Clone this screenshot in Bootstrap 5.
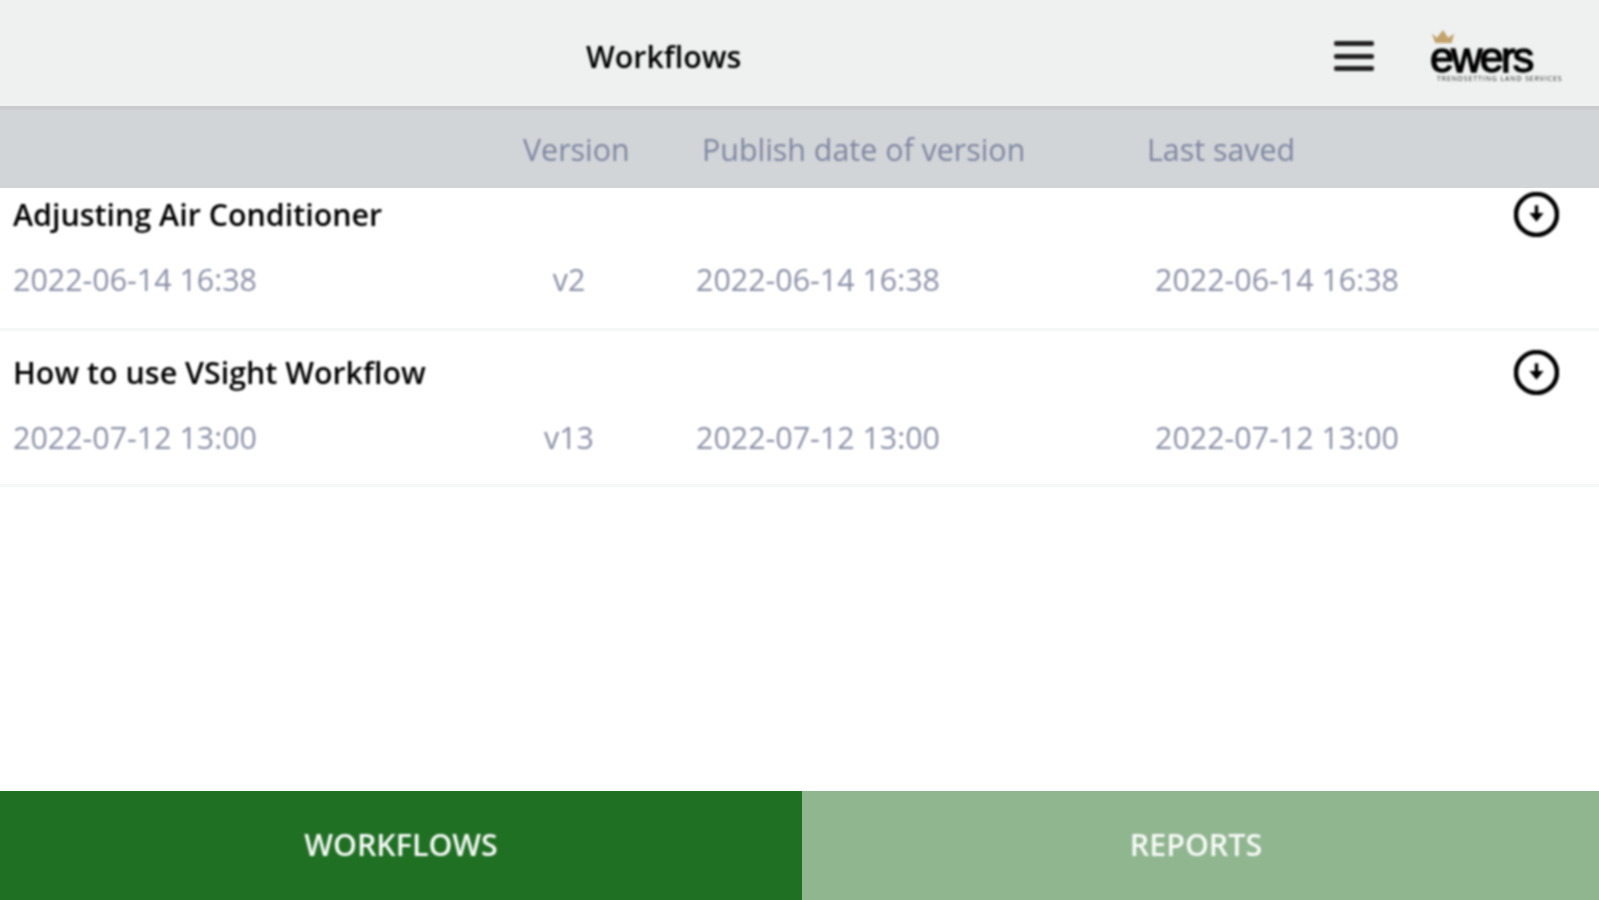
<!DOCTYPE html>
<html lang="en">
<head>
<meta charset="utf-8">
<title>Workflows</title>
<link href="https://cdn.jsdelivr.net/npm/bootstrap@5.3.0/dist/css/bootstrap.min.css" rel="stylesheet">
<style>
html,body{height:100%;}
body{font-family:"Open Sans",sans-serif;background:#fff;overflow:hidden;}
.app-shell{height:900px;}
.top-title,.menu-btn,.logo-box,.head-row>div,.row-title,.row-meta,.dl-icon,.tab-text{filter:blur(.9px);}
.top-bar{height:110px;background:#eff1f1;border-bottom:4px solid #c9cdd0;position:relative;}
.top-title{position:absolute;left:586px;top:36px;font-size:30.4px;font-weight:600;line-height:42px;color:#000;}
.menu-btn{position:absolute;left:1334px;top:41px;width:40px;height:30px;display:flex;flex-direction:column;justify-content:space-between;}
.menu-btn span{display:block;height:5px;border-radius:2px;background:#222;}
.logo-box{position:absolute;left:1430px;top:28px;width:136px;height:58px;}
.logo-word{position:absolute;left:0;top:11px;font-family:"Liberation Sans",sans-serif;font-size:43px;letter-spacing:-2.6px;line-height:36px;color:#000;-webkit-text-stroke:1.4px #000;}
.logo-sub{position:absolute;left:7px;top:47px;width:129px;white-space:nowrap;font-size:6.8px;letter-spacing:1px;line-height:8px;color:#222;overflow:hidden;}
.head-row{height:78px;background:#d2d5d8;color:#7f86a0;font-size:30.4px;padding-top:2px;}
.cell-a{width:523px;flex:none;}
.cell-b{width:179px;flex:none;}
.cell-c{width:445px;flex:none;}
.data-row{border-bottom:3px solid #f5f6f6;padding-left:13px;padding-right:40px;}
.row-title{font-size:30.4px;font-weight:600;color:#000;line-height:42px;}
.row-meta{font-size:30.4px;color:#8b90a6;line-height:42px;margin-top:22px;}
.dl-icon{width:45px;height:45px;color:#000;}
.m1{width:507px;flex:none;}
.m2{width:98px;flex:none;text-align:center;margin-right:78px;}
.m3{width:459px;flex:none;}
.row-first{height:143px;padding-top:4px;}
.row-second{height:156px;padding-top:19px;}
.tab-bar{height:109px;margin-top:auto;}
.tab-item{font-size:30.4px;font-weight:600;color:#f7faf7;padding-bottom:2px;}
.tab-on{background:#207024;width:802px;}
.tab-off{background:#90b690;flex:1;padding-right:9px;}
</style>
</head>
<body>
<div class="app-shell d-flex flex-column">
  <header class="top-bar flex-shrink-0">
    <div class="top-title">Workflows</div>
    <div class="menu-btn"><span></span><span></span><span></span></div>
    <div class="logo-box">
      <svg width="26" height="18" viewBox="0 0 30 18" class="position-absolute top-0 start-0" aria-hidden="true"><path d="M2 5l6 5 7-9 6 9 7-5-3 11H6z" fill="#c2a36c"/></svg>
      <div class="logo-word">ewers</div>
      <div class="logo-sub">TRENDSETTING LAND SERVICES</div>
    </div>
  </header>
  <div class="head-row d-flex align-items-center flex-shrink-0">
    <div class="cell-a"></div>
    <div class="cell-b">Version</div>
    <div class="cell-c">Publish date of version</div>
    <div>Last saved</div>
  </div>
  <div class="data-row flex-shrink-0 row-first">
    <div class="d-flex justify-content-between align-items-center">
      <div class="row-title">Adjusting Air Conditioner</div>
      <svg class="dl-icon" viewBox="0 0 44 44" aria-hidden="true"><circle cx="22" cy="22" r="20" fill="none" stroke="currentColor" stroke-width="4.4"/><path d="M22 13v11" stroke="currentColor" stroke-width="3.4"/><path d="M15 20.5h14L22 29z" fill="currentColor"/></svg>
    </div>
    <div class="row-meta d-flex">
      <div class="m1">2022-06-14 16:38</div><div class="m2">v2</div><div class="m3">2022-06-14 16:38</div><div>2022-06-14 16:38</div>
    </div>
  </div>
  <div class="data-row flex-shrink-0 row-second">
    <div class="d-flex justify-content-between align-items-center">
      <div class="row-title">How to use VSight Workflow</div>
      <svg class="dl-icon" viewBox="0 0 44 44" aria-hidden="true"><circle cx="22" cy="22" r="20" fill="none" stroke="currentColor" stroke-width="4.4"/><path d="M22 13v11" stroke="currentColor" stroke-width="3.4"/><path d="M15 20.5h14L22 29z" fill="currentColor"/></svg>
    </div>
    <div class="row-meta d-flex">
      <div class="m1">2022-07-12 13:00</div><div class="m2">v13</div><div class="m3">2022-07-12 13:00</div><div>2022-07-12 13:00</div>
    </div>
  </div>
  <div class="tab-bar d-flex flex-shrink-0">
    <div class="tab-item tab-on d-flex align-items-center justify-content-center"><span class="tab-text">WORKFLOWS</span></div>
    <div class="tab-item tab-off d-flex align-items-center justify-content-center"><span class="tab-text">REPORTS</span></div>
  </div>
</div>
<script src="https://cdn.jsdelivr.net/npm/bootstrap@5.3.0/dist/js/bootstrap.bundle.min.js"></script>
</body>
</html>
